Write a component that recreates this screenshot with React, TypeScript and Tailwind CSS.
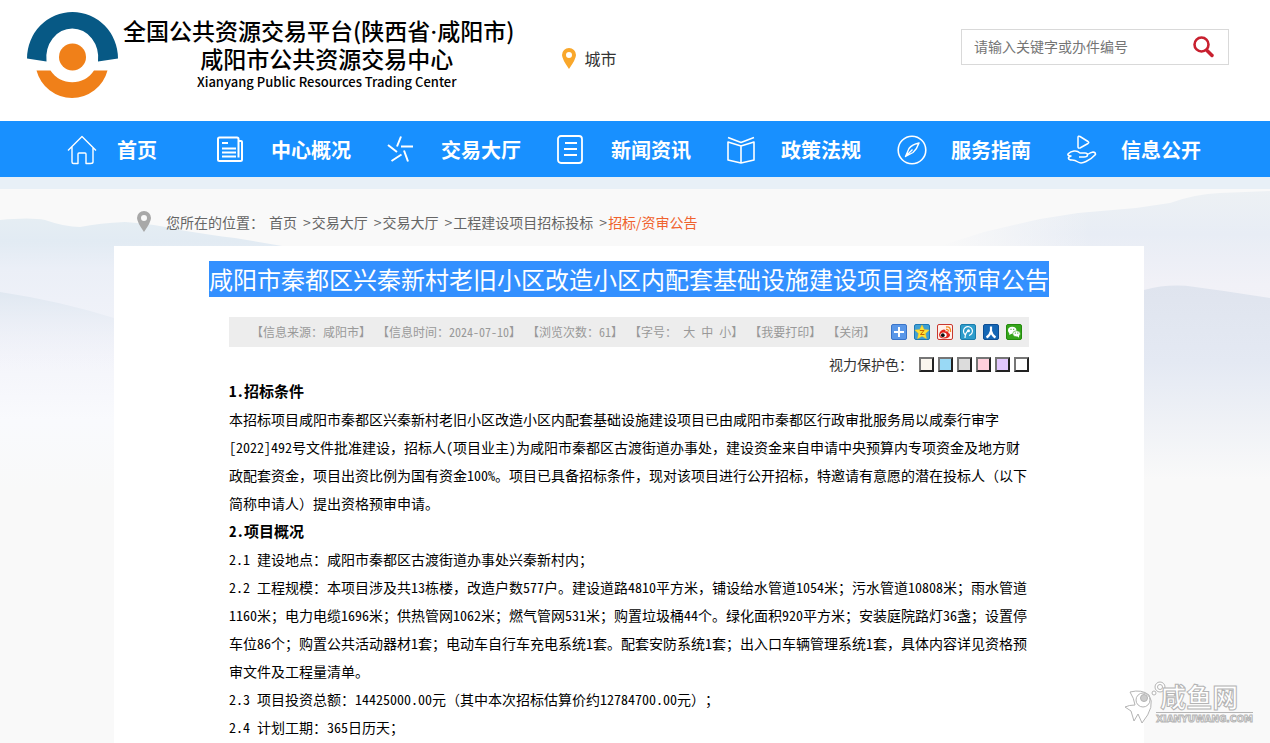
import type { ReactNode } from 'react'
import clsx from 'clsx'

const NAV: { label: string; icon: ReactNode }[] = [
  {
    label: '首页',
    icon: <path d="M1 15.500 15 1.500l14 14M5 12v15q0 1.500 1.500 1.500H11V19q0-1 1-1h6q1 0 1 1v9.500h4.500Q26 28.500 26 27V12" strokeWidth="1.400" />,
  },
  {
    label: '中心概况',
    icon: (
      <>
        <path d="M1 4Q1 2.500 2.500 2.500H20q1.500 0 1.500 1.500V22.500M21.500 6H24q1 0 1 1V24.500q0 1.500-1.500 1.500H2.500Q1 26 1 24.500V4" strokeWidth="2" />
        <path d="M5 8h6M5 13.500h14M5 17.500h14M5 21.500h14" strokeWidth="2" />
      </>
    ),
  },
  {
    label: '交易大厅',
    icon: <path d="m14 1.500-4 10M1 10l9 7M4.500 26l10-6.500M21 26.500l-4-11M14 11.500h12" strokeWidth="2" />,
  },
  {
    label: '新闻资讯',
    icon: (
      <>
        <rect x="1" y="1" width="24" height="27" rx="3" strokeWidth="1.800" />
        <path d="M8 8h12M7 14h13M7 20h13" strokeWidth="1.800" />
      </>
    ),
  },
  {
    label: '政策法规',
    icon: <path d="m1 2.500 13 5L27 2.500M1 7l13 4 13-4v18l-13 3-13-3zM14 11v17" strokeWidth="1.600" />,
  },
  {
    label: '服务指南',
    icon: (
      <>
        <circle cx="15" cy="15" r="13.800" strokeWidth="1.600" />
        <path d="M22 8q-7 1.500-10 5.500L8.500 21.500 16 17.500Q20 14 22 8zM8.500 21.500l7-7" strokeWidth="1.400" />
      </>
    ),
  },
  {
    label: '信息公开',
    icon: (
      <path
        d="M11 2.500q0-2 2-1l8 5q1.500 1 0 2l-8 4.500q-2 .5-2-1zM12 22h5q3.500 0 3.500-2t-2.500-2h-5q-2.500-2.500-6-2T1.500 18.500 4 21q-3 1-2.500 2.500T5 25q3 0 6 2t8-.5q6-3 9.500-7 0-2.500-2.500-2.500-2.500.5-5.500 2.500"
        strokeWidth="1.500"
      />
    ),
  },
]

const CRUMBS = ['首页', '交易大厅', '交易大厅', '工程建设项目招标投标']

const SWATCHES = [
  { name: '米色', color: 'bg-[#faf6ee]' },
  { name: '蓝色', color: 'bg-[#99d9f5]' },
  { name: '灰色', color: 'bg-[#dcdcdc]' },
  { name: '粉色', color: 'bg-[#ffd0dc]' },
  { name: '紫色', color: 'bg-[#e3c8ff]' },
  { name: '白色', color: 'bg-white' },
]

const SHARE: { name: string; icon: ReactNode }[] = [
  {
    name: '更多',
    icon: (
      <>
        <rect x=".5" y=".5" width="15" height="15" rx="1.500" fill="#5a97e8" stroke="#3a74c8" />
        <path d="M8 3v10M3 8h10" stroke="#fff" strokeWidth="2" />
      </>
    ),
  },
  {
    name: 'QQ空间',
    icon: (
      <>
        <rect x=".5" y=".5" width="15" height="15" rx="1.500" fill="#3fa0d4" stroke="#1c78b4" />
        <path d="m8 .8 2.200 4.700 5 .6-3.700 3.500 1 5.200L8 12.300l-4.500 2.500 1-5.200L.8 6.100l5-.6z" fill="#ffe135" stroke="#f0c020" strokeWidth=".4" />
        <path d="M5.800 6.500h4.200l-3.500 4h4" fill="none" stroke="#c86400" strokeWidth="1" />
      </>
    ),
  },
  {
    name: '新浪微博',
    icon: (
      <>
        <rect x=".5" y=".5" width="15" height="15" rx="1.500" fill="#fff0ea" stroke="#c8372e" />
        <path d="M9 3q5-1 4.500 5M9 5.500q2.500-.5 2.500 2" fill="none" stroke="#f08a24" strokeWidth="1.300" />
        <path d="M2 10.500q1-4.500 5-5 2 0 1.500 2 3-1 3 1.500 2 .500 1.500 2.500-1 3-6 3-5 0-5-4z" fill="#e0241c" />
        <ellipse cx="6.500" cy="11" rx="3.200" ry="2.500" fill="#fff" />
        <circle cx="5.800" cy="11.200" r="1.900" fill="#111" />
      </>
    ),
  },
  {
    name: '腾讯微博',
    icon: (
      <>
        <rect x=".5" y=".5" width="15" height="15" rx="1.500" fill="#2d9ccb" stroke="#1b7cab" />
        <path d="M5 10.500A4.500 4.500 0 1 1 9 11.500M5 14q0-5 3.500-7.500" fill="none" stroke="#fff" strokeWidth="1.200" />
        <circle cx="8.500" cy="6.800" r="1.500" fill="#fff" />
      </>
    ),
  },
  {
    name: '人人网',
    icon: (
      <>
        <rect x=".5" y=".5" width="15" height="15" rx="1.500" fill="#1566b4" stroke="#0d4d92" />
        <path d="M8 2.500v4.500Q7 11.500 3.500 13.500M8 7q1 4.500 4.500 6.500" fill="none" stroke="#fff" strokeWidth="2.200" />
      </>
    ),
  },
  {
    name: '微信',
    icon: (
      <>
        <rect x=".5" y=".5" width="15" height="15" rx="1.500" fill="#35a51a" stroke="#238a0c" />
        <ellipse cx="6.200" cy="6.300" rx="4.200" ry="3.500" fill="#fff" />
        <path d="m3.500 8-.3 3 3-1.600z" fill="#fff" />
        <ellipse cx="10.500" cy="9.800" rx="3.800" ry="3" fill="#fff" stroke="#35a51a" strokeWidth=".6" />
        <path d="m11 12 2 1.800V11z" fill="#fff" />
        <path d="M4.500 5.300h1M7.200 5.300h1M8.800 9.100h1M11.300 9.100h1" stroke="#238a0c" />
      </>
    ),
  },
]

const SECTIONS = [
  {
    title: '1.招标条件',
    paragraphs: [
      [
        '本招标项目咸阳市秦都区兴秦新村老旧小区改造小区内配套基础设施建设项目已由咸阳市秦都区行政审批服务局以咸秦行审字',
        '[2022]492号文件批准建设，招标人(项目业主)为咸阳市秦都区古渡街道办事处，建设资金来自申请中央预算内专项资金及地方财',
        '政配套资金，项目出资比例为国有资金100%。项目已具备招标条件，现对该项目进行公开招标，特邀请有意愿的潜在投标人（以下',
        '简称申请人）提出资格预审申请。',
      ],
    ],
  },
  {
    title: '2.项目概况',
    paragraphs: [
      ['2.1 建设地点：咸阳市秦都区古渡街道办事处兴秦新村内；'],
      [
        '2.2 工程规模：本项目涉及共13栋楼，改造户数577户。建设道路4810平方米，铺设给水管道1054米；污水管道10808米；雨水管道',
        '1160米；电力电缆1696米；供热管网1062米；燃气管网531米；购置垃圾桶44个。绿化面积920平方米；安装庭院路灯36盏；设置停',
        '车位86个；购置公共活动器材1套；电动车自行车充电系统1套。配套安防系统1套；出入口车辆管理系统1套，具体内容详见资格预',
        '审文件及工程量清单。',
      ],
      ['2.3 项目投资总额：14425000.00元（其中本次招标估算价约12784700.00元）；'],
      ['2.4 计划工期：365日历天；'],
    ],
  },
]

// Half-width digits and latin, full-width Chinese punctuation
function Mixed({ text }: { text: string }) {
  return (
    <>
      {text.split(/([\x20-\x7e]+)/).map((part, i) =>
        i % 2 ? <span key={i} className="whitespace-pre [font-feature-settings:'hwid']">{part}</span> : part,
      )}
    </>
  )
}

function Pin({ className }: { className?: string }) {
  return (
    <svg viewBox="0 0 14 21" className={clsx('h-[21px] w-[14px]', className)} fill="currentColor" aria-hidden="true">
      <path fillRule="evenodd" d="M7 0a7 7 0 0 1 7 7q0 4-7 14Q0 11 0 7a7 7 0 0 1 7-7zm0 4a3 3 0 1 0 0 6 3 3 0 0 0 0-6z" />
    </svg>
  )
}

function Header() {
  return (
    <header className="flex h-[121px] items-start bg-white pr-[41px] pl-[27px]">
      <a href="#" className="flex items-start gap-[5px] pt-3 text-black">
        <svg viewBox="0 0 91 86" className="h-[86px] w-[91px]" aria-hidden="true">
          <path d="M0 46.500A45.500 46.500 0 0 1 91 46.500L71 49.500A26 29 0 1 0 19.500 49.500Z" fill="#075985" />
          <path d="M9.500 58.500H23.500A26 26 0 0 0 67 58.500H80.500A36.700 36.700 0 0 1 9.500 58.500Z" fill="#f08019" />
          <circle cx="45.500" cy="45" r="13.500" fill="#f08019" />
        </svg>
        <div className="flex flex-col items-center pt-1 font-medium whitespace-nowrap">
          <span className="text-[23px] leading-7">
            全国公共资源交易平台(陕西省<span className="font-[Inter,sans-serif] leading-none">·</span>咸阳市)
          </span>
          <span className="pl-4 text-[23px] leading-7">咸阳市公共资源交易中心</span>
          <span className="pl-4 text-[13px] leading-5">Xianyang Public Resources Trading Center</span>
        </div>
      </a>
      <div className="ml-12 flex items-center gap-2 pt-[46px] text-base leading-6 text-[#333]">
        <Pin className="text-[#f9a72b]" />
        城市
      </div>
      <form className="mt-[29px] ml-auto flex h-9 w-[268px] items-center border border-[#d9d9d9] px-3">
        <input
          type="text"
          aria-label="搜索"
          placeholder="请输入关键字或办件编号"
          className="min-w-0 flex-1 pb-[2px] text-sm outline-none placeholder:text-[#757575]"
        />
        <button type="button" aria-label="搜索" className="text-[#c8202f]">
          <svg viewBox="0 0 24 24" className="size-6" fill="none" stroke="currentColor" aria-hidden="true">
            <circle cx="9.500" cy="9.500" r="7" strokeWidth="2.600" />
            <path d="m15 15.500 5 5" strokeWidth="3.500" strokeLinecap="round" />
          </svg>
        </button>
      </form>
    </header>
  )
}

function Nav() {
  return (
    <nav className="flex h-14 items-center bg-[#1890ff] pt-[2px] pl-[67px] text-xl font-bold text-white">
      {NAV.map((item, i) => (
        <a key={item.label} href="#" className={clsx('flex shrink-0 items-center', i === 0 ? 'w-[150px] gap-5' : 'w-[170px] gap-6')}>
          <svg viewBox="0 0 30 30" className="size-[30px]" fill="none" stroke="currentColor" strokeLinejoin="round" aria-hidden="true">
            {item.icon}
          </svg>
          {item.label}
        </a>
      ))}
    </nav>
  )
}

// Misty hills behind the article
function Hills() {
  return (
    <svg viewBox="0 0 1270 554" preserveAspectRatio="none" className="absolute inset-x-0 top-0 h-[554px] w-full" aria-hidden="true">
      <defs>
        <linearGradient id="left" x1="0" y1="25" x2="0" y2="300" gradientUnits="userSpaceOnUse">
          <stop offset="0" stopColor="#e6eef3" />
          <stop offset=".1" stopColor="#e2ebf3" />
          <stop offset=".2" stopColor="#ebeff7" />
          <stop offset=".5" stopColor="#f3f4fa" />
          <stop offset=".75" stopColor="#f9fafd" />
          <stop offset="1" stopColor="#f9f9f9" />
        </linearGradient>
        <linearGradient id="slope" x1="0" y1="103" x2="0" y2="180" gradientUnits="userSpaceOnUse">
          <stop offset="0" stopColor="#e0e8f1" />
          <stop offset="1" stopColor="#f1f2f9" stopOpacity="0" />
        </linearGradient>
        <linearGradient id="right" x1="0" y1="0" x2="0" y2="300" gradientUnits="userSpaceOnUse">
          <stop offset="0" stopColor="#edf1f4" />
          <stop offset=".15" stopColor="#e8edf5" />
          <stop offset=".32" stopColor="#f1f1f7" />
          <stop offset="1" stopColor="#f9f9f9" />
        </linearGradient>
        <linearGradient id="ridge" x1="0" y1="95" x2="0" y2="290" gradientUnits="userSpaceOnUse">
          <stop offset="0" stopColor="#dfe4ee" />
          <stop offset=".4" stopColor="#e4e9f3" />
          <stop offset="1" stopColor="#f9f9f9" />
        </linearGradient>
        <linearGradient id="haze" x1="940" y1="0" x2="1090" y2="0" gradientUnits="userSpaceOnUse">
          <stop offset="0" stopColor="#f9f9f9" />
          <stop offset="1" stopColor="#f9f9f9" stopOpacity="0" />
        </linearGradient>
      </defs>
      <path d="M0 31Q30 28 45 31 65 38 80 38 100 34 125 33 155 35 180 41 210 46 235 49L300 60V554H0Z" fill="url(#left)" />
      <path d="M0 103Q60 112 114 129V190H0Z" fill="url(#slope)" />
      <path d="M940 57 984 43 1040 30 1078 24 1136 19 1170 14Q1195 5 1220 4L1270 2V554H940Z" fill="url(#right)" />
      <path d="M940 0H1090V57H940Z" fill="url(#haze)" />
      <path d="M1120 108 1144 101Q1170 94 1195 98L1224 102 1270 109V554H1120Z" fill="url(#ridge)" />
    </svg>
  )
}

function MetaBar() {
  return (
    <div className="flex h-[30px] items-center gap-[6px] bg-[#ededed] pr-[7px] pl-[22px] text-xs whitespace-nowrap text-[#999]">
      <span>【信息来源：咸阳市】</span>
      <span><Mixed text="【信息时间：2024-07-10】" /></span>
      <span><Mixed text="【浏览次数：61】" /></span>
      <span className="flex">
        【字号：
        <span className="flex gap-[6px] pl-[6px]">
          <button type="button">大</button>
          <button type="button">中</button>
          <button type="button">小</button>
        </span>
        】
      </span>
      <button type="button">【我要打印】</button>
      <button type="button">【关闭】</button>
      <div className="ml-auto flex gap-[7px]">
        {SHARE.map(s => (
          <a key={s.name} href="#" title={s.name}>
            <svg viewBox="0 0 16 16" className="size-4" aria-hidden="true">{s.icon}</svg>
          </a>
        ))}
      </div>
    </div>
  )
}

function Watermark() {
  return (
    <div className="absolute right-[17px] bottom-[18px] flex items-end text-white">
      <svg viewBox="0 0 44 44" className="-mr-3 h-11 w-11" fill="#fff" stroke="#b4b4b4" aria-hidden="true">
        <circle cx="36" cy="6" r="5" />
        <circle cx="36" cy="6" r="2.500" />
        <circle cx="30" cy="12" r="2" />
        <path d="M6 11q12-3 19 3 7 11-7 28l-4-9-4 7-3-10-6-4q4-2 10-2-1-7-5-13z" />
        <circle cx="19" cy="19" r="7" />
        <circle cx="20" cy="17" r="3.500" fill="#ccc" />
      </svg>
      <div className="flex flex-col gap-[2px]">
        <span className="pl-1 text-[26px] leading-7 font-bold [-webkit-text-stroke:1px_#b4b4b4]">咸鱼网</span>
        <span className="border-t border-[#b4b4b4] font-['DejaVu_Sans',sans-serif] text-[9px] leading-3 font-bold [-webkit-text-stroke:1px_#b4b4b4]">
          XIANYUWANG.COM
        </span>
      </div>
    </div>
  )
}

export default function App() {
  return (
    <div className="relative flex min-h-screen flex-col overflow-x-hidden bg-[#f9f9f9] font-['Noto_Sans_CJK_SC',sans-serif] [text-spacing-trim:space-all]">
      <Header />
      <Nav />
      <div className="h-3 bg-[#e8f0f7]" />
      <main className="relative flex flex-1 flex-col pr-3">
        <Hills />
        <div className="relative mx-auto flex w-full max-w-[1030px] flex-1 flex-col">
          <div className="flex h-[57px] items-center gap-[15px] pt-2 pl-[23px] text-sm text-[#666]">
            <Pin className="text-[#a8a8a8]" />
            <div className="flex whitespace-nowrap">
              <span className="pr-[5px]">您所在的位置：</span>
              {CRUMBS.map((c, i) => (
                <span key={i}>
                  <a href="#">{c}</a>
                  <span className="pr-px pl-[6px]">&gt;</span>
                </span>
              ))}
              <a href="#" className="text-[#f0622d]">招标/资审公告</a>
            </div>
          </div>

          <article className="flex-1 bg-white pt-[15px]">
            <h1 className="text-center text-2xl leading-9 text-white">
              <span className="inline-block bg-[#3390ff]">咸阳市秦都区兴秦新村老旧小区改造小区内配套基础设施建设项目资格预审公告</span>
            </h1>
            <div className="mx-auto mt-5 max-w-[800px]">
              <MetaBar />
              <div className="flex h-[30px] items-center justify-end gap-1 pt-1 text-sm text-[#333]">
                <span className="pr-[2px]">视力保护色：</span>
                {SWATCHES.map(s => (
                  <button
                    key={s.name}
                    type="button"
                    aria-label={s.name}
                    className={clsx('size-[15px] border-2 border-t-[#767676] border-r-[#222] border-b-[#222] border-l-[#767676]', s.color)}
                  />
                ))}
              </div>
              {SECTIONS.map(section => (
                <section key={section.title} className="text-sm leading-7 text-black">
                  <h2 className="text-[15px] leading-7 font-bold"><Mixed text={section.title} /></h2>
                  {section.paragraphs.map(lines => (
                    <p key={lines[0]}>
                      {lines.map(line => (
                        <span key={line} className="block whitespace-nowrap"><Mixed text={line} /></span>
                      ))}
                    </p>
                  ))}
                </section>
              ))}
            </div>
          </article>
        </div>
      </main>
      <Watermark />
    </div>
  )
}
